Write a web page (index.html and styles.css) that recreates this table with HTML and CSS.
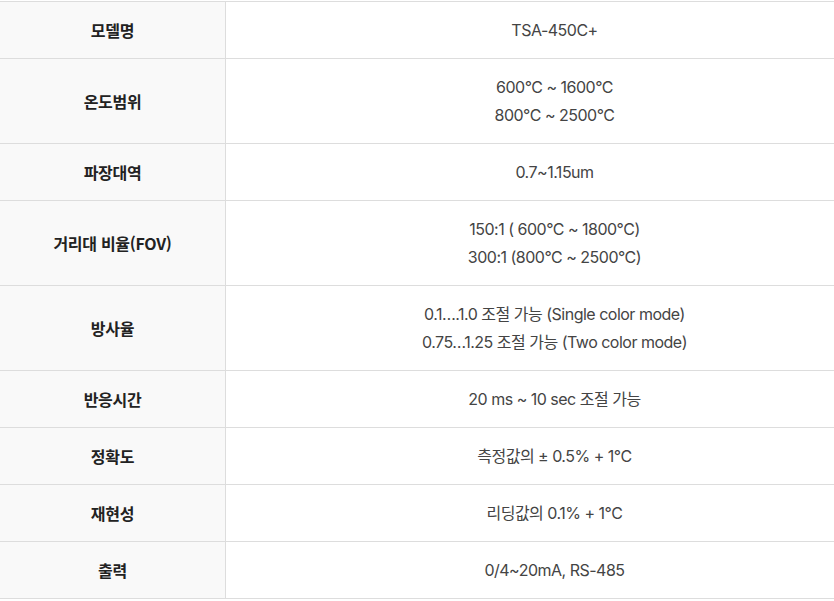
FILE: index.html
```html
<!DOCTYPE html>
<html lang="ko">
<head>
<meta charset="utf-8">
<link rel="stylesheet" href="styles.css">
</head>
<body>
<table class="spec">
  <tbody>
    <tr><th>모델명</th><td>TSA-450C+</td></tr>
    <tr><th>온도범위</th><td>600°C ~ 1600°C<br>800°C ~ 2500°C</td></tr>
    <tr><th>파장대역</th><td>0.7~1.15um</td></tr>
    <tr><th>거리대 비율(FOV)</th><td>150:1 ( 600°C ~ 1800°C)<br>300:1 (800°C ~ 2500°C)</td></tr>
    <tr><th>방사율</th><td>0.1….1.0 조절 가능 (Single color mode)<br>0.75…1.25 조절 가능 (Two color mode)</td></tr>
    <tr><th>반응시간</th><td>20 ms ~ 10 sec 조절 가능</td></tr>
    <tr><th>정확도</th><td>측정값의 ± 0.5% + 1°C</td></tr>
    <tr><th>재현성</th><td>리딩값의 0.1% + 1°C</td></tr>
    <tr><th>출력</th><td>0/4~20mA, RS-485</td></tr>
  </tbody>
</table>
</body>
</html>
```
FILE: styles.css
```css
html, body {
  margin: 0;
  padding: 0;
  background: #fff;
}
body {
  padding-top: 1px;
}
.spec {
  width: 100%;
  border-collapse: collapse;
  border-top: 1px solid #dddddd;
  font-size: 16px;
}
.spec th,
.spec td {
  border-bottom: 1px solid #dddddd;
  padding: 14px 10px;
  line-height: 28px;
  text-align: center;
  vertical-align: middle;
}
.spec th {
  width: 205px;
  background: #f9f9f9;
  border-right: 1px solid #dddddd;
  color: #222;
  font-weight: 700;
  font-family: "Noto Sans CJK KR", "Noto Sans", sans-serif;
  letter-spacing: -0.3px;
}
.spec td {
  padding-left: 59px;
  color: #444;
  font-weight: 400;
  font-family: Inter, "Noto Sans CJK KR", sans-serif;
  letter-spacing: -0.5px;
}
```
